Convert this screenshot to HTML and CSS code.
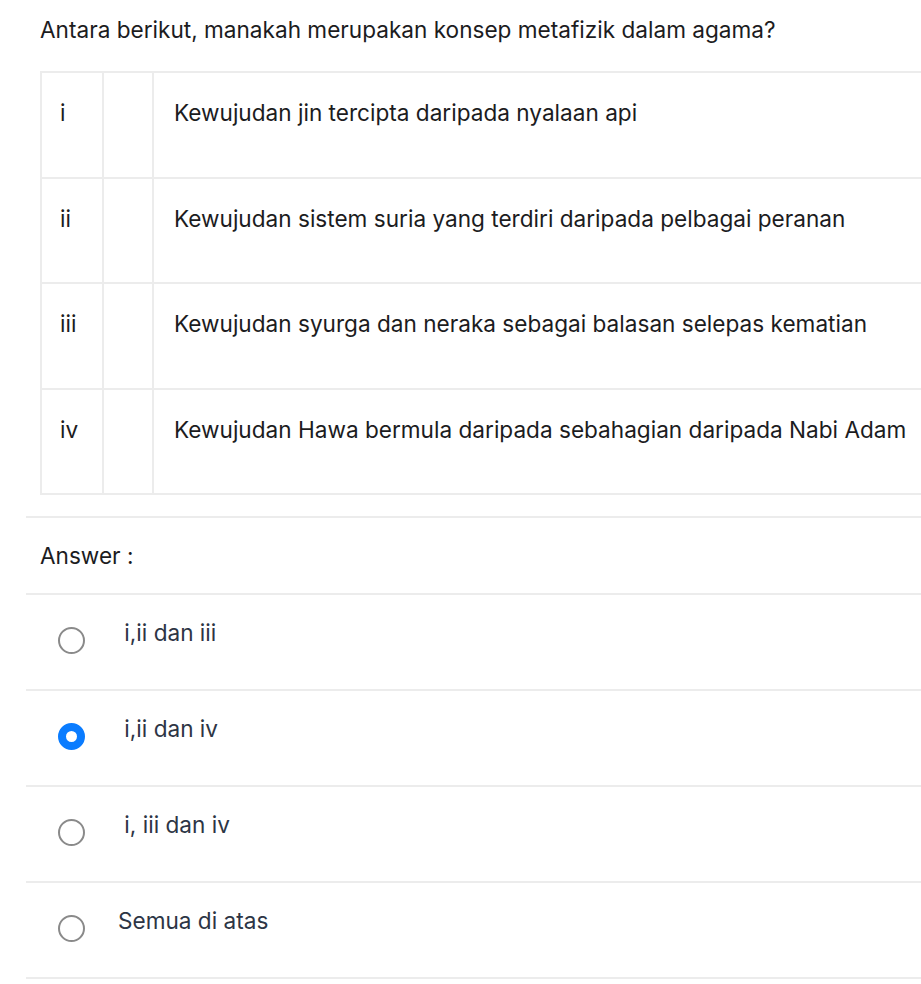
FILE: index.html
```html
<!DOCTYPE html>
<html>
<head>
<meta charset="utf-8">
<link rel="stylesheet" href="styles.css">
</head>
<body>
<div class="page">
  <div class="question">Antara berikut, manakah merupakan konsep metafizik dalam agama?</div>
  <table class="stmt">
    <tr><td class="c1">i</td><td class="c2"></td><td class="c3">Kewujudan jin tercipta daripada nyalaan api</td></tr>
    <tr><td class="c1">ii</td><td class="c2"></td><td class="c3">Kewujudan sistem suria yang terdiri daripada pelbagai peranan</td></tr>
    <tr><td class="c1">iii</td><td class="c2"></td><td class="c3">Kewujudan syurga dan neraka sebagai balasan selepas kematian</td></tr>
    <tr><td class="c1">iv</td><td class="c2"></td><td class="c3">Kewujudan Hawa bermula daripada sebahagian daripada Nabi Adam</td></tr>
  </table>
  <div class="answers">
    <div class="answer-label">Answer :</div>
    <div class="option"><span class="radio"></span><span class="opt-text">&nbsp;i,ii dan iii</span></div>
    <div class="option"><span class="radio checked"></span><span class="opt-text">&nbsp;i,ii dan iv</span></div>
    <div class="option"><span class="radio"></span><span class="opt-text">&nbsp;i, iii dan iv</span></div>
    <div class="option"><span class="radio"></span><span class="opt-text">Semua di atas</span></div>
  </div>
</div>
</body>
</html>
```
FILE: styles.css
```css
html, body {
  margin: 0;
  padding: 0;
  background: #ffffff;
  overflow: hidden;
}
body {
  font-family: Inter, "Noto Sans", sans-serif;
  font-size: 22.6px;
  line-height: 30px;
  color: #1c1c1e;
}
.page {
  width: 1000px;
  padding-left: 26px;
}
.question {
  padding: 15px 0 0 14px;
  height: 27px;
}
.stmt {
  margin-left: 14px;
  margin-top: 29px;
  border-collapse: collapse;
  width: 960px;
}
.stmt td {
  border: 2px solid #ececec;
  vertical-align: top;
  padding: 25px 0 0 0;
  height: 78.5px;
}
.c1 {
  width: 42px;
  padding-left: 18px !important;
}
.c2 {
  width: 48px;
}
.c3 {
  padding-left: 20px !important;
}
.answers {
  margin-top: 21px;
  border-top: 2px solid #ececec;
}
.answer-label {
  padding: 23px 0 22px 14px;
  border-bottom: 2px solid #ececec;
}
.option {
  display: flex;
  align-items: flex-start;
  height: 94px;
  border-bottom: 2px solid #ececec;
  color: #2d3545;
}
.radio {
  box-sizing: border-box;
  width: 27px;
  height: 27px;
  border-radius: 50%;
  border: 2.5px solid #8a8a8a;
  margin: 32px 0 0 32px;
  flex: none;
}
.radio.checked {
  border: 8.5px solid #0a7cff;
}
.opt-text {
  margin: 23px 0 0 33px;
}
```
